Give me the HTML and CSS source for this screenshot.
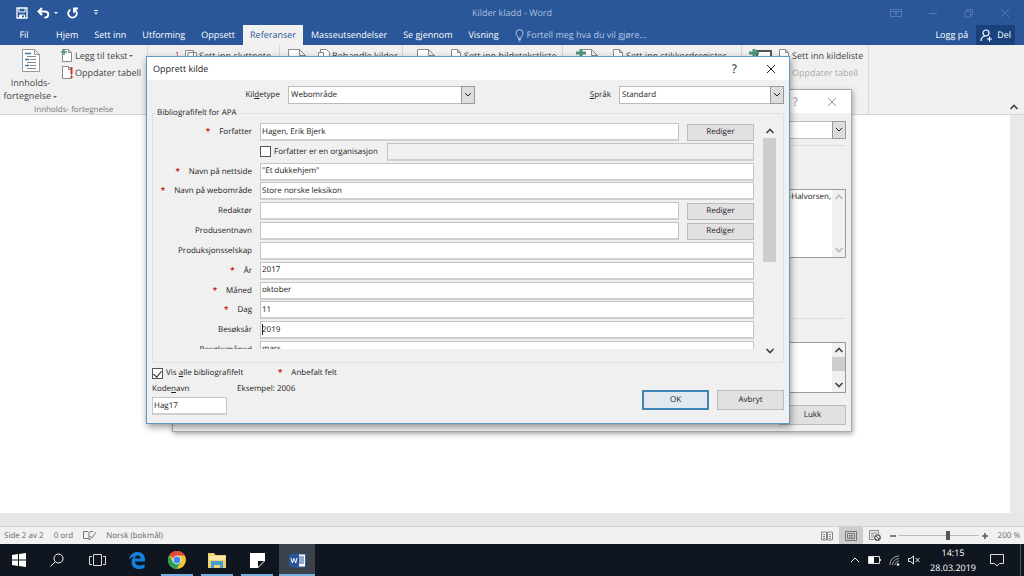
FILE: index.html
```html
<!DOCTYPE html>
<html lang="no">
<head>
<meta charset="utf-8">
<title>Kilder kladd - Word</title>
<link rel="stylesheet" href="styles.css">
</head>
<body>
<svg class="defs" aria-hidden="true">
  <symbol id="chev" viewBox="0 0 8 6"><path d="M1 1l3 3 3-3" fill="none" stroke="currentColor"/></symbol>
  <symbol id="down" viewBox="0 0 10 8"><path d="M1.500 2l3.500 3.500L8.500 2" fill="none" stroke="currentColor" stroke-width="1.700"/></symbol>
  <symbol id="up" viewBox="0 0 10 8"><path d="M1.500 6l3.500-3.500L8.500 6" fill="none" stroke="currentColor" stroke-width="1.700"/></symbol>
  <symbol id="x" viewBox="0 0 10 10"><path d="M1 1l8 8M9 1l-8 8" fill="none" stroke="currentColor"/></symbol>
  <symbol id="doc" viewBox="0 0 12 13"><path d="M1.500.5h6l3 3v9h-9zM7.500.5v3h3" fill="#fff" stroke="#8a8a8a"/></symbol>
  <symbol id="page" viewBox="0 0 18 22"><path d="M.5.5h11l6 6v15H.5zM11.500.5v6h6" fill="#fff" stroke="#8a8a8a"/></symbol>
  <symbol id="plus" viewBox="0 0 12 10"><path d="M6 0v9M1 4h10" stroke="#4f9480" stroke-width="3"/></symbol>
</svg>
<div class="screen">
  <header class="titlebar">
    <div class="quick">
      <button aria-label="Lagre"><svg width="12" height="12" viewBox="0 0 12 12"><path d="M1 1h10v10H1z" fill="none" stroke="#fff" stroke-width="1.300"/><path d="M3 1v4h6V1M3.500 11V8h5v3" fill="none" stroke="#fff"/><path d="M4 8h2v3H4z" fill="#fff"/></svg></button>
      <button aria-label="Angre"><svg width="21" height="12" viewBox="0 0 21 12"><path d="M1.500 4.500h6c5 0 5 6 0 6M5 1L1.500 4.500 5 8" fill="none" stroke="#fff" stroke-width="2"/><path d="M17 5h4l-2 2z" fill="#fff"/></svg></button>
      <button aria-label="Gjenta"><svg width="12" height="12" viewBox="0 0 12 12"><path d="M3.500 2.500a4.300 4.300 0 1 0 4 0M7 6V1.500h4" fill="none" stroke="#fff" stroke-width="1.800"/></svg></button>
      <button aria-label="Tilpass"><svg width="6" height="6" viewBox="0 0 6 6"><path d="M1 .5h4" stroke="#fff"/><path d="M1 2.500h4l-2 2z" fill="#fff"/></svg></button>
    </div>
    <h1>Kilder kladd - Word</h1>
    <div class="winbtns">
      <button aria-label="Båndvisning"><svg width="12" height="10" viewBox="0 0 12 10"><path d="M.5 1.500h11v7H.5zM.5 3.500h11M6 8V5M4.500 6L6 4.500 7.500 6" fill="none" stroke="currentColor"/></svg></button>
      <button aria-label="Minimer"><svg width="10" height="10" viewBox="0 0 10 10"><path d="M1 5.500h8" stroke="currentColor"/></svg></button>
      <button aria-label="Gjenopprett"><svg width="10" height="10" viewBox="0 0 10 10"><path d="M1 3.500h5.500V9H1zM3 3.500v-2h5.500V7h-2" fill="none" stroke="currentColor"/></svg></button>
      <button aria-label="Lukk vindu"><svg width="10" height="10"><use href="#x"/></svg></button>
    </div>
  </header>
  <nav class="tabs">
    <button class="tab file">Fil</button><button class="tab">Hjem</button><button class="tab">Sett inn</button><button class="tab">Utforming</button><button class="tab">Oppsett</button><button class="tab active">Referanser</button><button class="tab">Masseutsendelser</button><button class="tab">Se gjennom</button><button class="tab">Visning</button>
    <button class="tell"><svg width="9" height="13" viewBox="0 0 9 13"><path d="M3 9C3 7 1 6.500 1 4.200a3.500 3.500 0 0 1 7 0C8 6.500 6 7 6 9zM3 10.500h3M3.500 12h2" fill="none" stroke="currentColor"/></svg>Fortell meg hva du vil gjøre...</button>
    <button class="login">Logg på</button>
    <button class="share"><svg width="13" height="13" viewBox="0 0 13 13"><circle cx="6" cy="4" r="3" fill="none" stroke="#fff" stroke-width="1.200"/><path d="M1 12c0-3 2-4.500 4-5M9.500 7.500v5M7 10h5" fill="none" stroke="#fff" stroke-width="1.200"/></svg>Del</button>
  </nav>
  <section class="ribbon">
    <div class="group g-toc">
      <div class="row">
        <button class="big"><svg width="18" height="23" viewBox="0 0 18 23"><path d="M.5.500h12l5 5v17H.5zM12.500.5v5h5" fill="#fff" stroke="#999"/><path d="M3 4.500h6M3 10.500h4M3 16.500h4" stroke="#3c78a8" stroke-width="1.500"/><path d="M5 7.500h9M8 10.500h6M5 13.500h9M8 16.500h6M5 19.500h9" stroke="#888"/></svg><span>Innholds-<br>fortegnelse <i class="caret"></i></span></button>
        <div class="stack">
          <button class="cmd"><svg width="12" height="13"><use href="#doc"/><path d="M3 0v6M0 3h6" stroke="#4f9480" stroke-width="1.500"/></svg>Legg til tekst <i class="caret"></i></button>
          <button class="cmd"><svg width="12" height="13"><use href="#doc"/><path d="M10.500 1v7M10.500 10v2" stroke="#d0342c" stroke-width="2"/></svg>Oppdater tabell</button>
        </div>
      </div>
      <div class="caption">Innholds- fortegnelse</div>
    </div>
    <div class="group g-note"><sup class="note">1</sup><button class="cmd"><svg width="12" height="13"><path d="M.5 1.500h8v8h-8zM3 3.500h8.500v9H3z" fill="#fff" stroke="#888"/></svg>Sett inn sluttnote</button></div>
    <div class="group g-cite"><svg width="18" height="22"><use href="#page"/></svg><button class="cmd"><svg width="12" height="13"><path d="M2.500.5h6l3 3v6h-9z" fill="#fff" stroke="#888"/><path d="M.5 3.500h5v8h-5z" fill="#fff" stroke="#888"/></svg>Behandle kilder</button></div>
    <div class="group g-capt"><svg width="18" height="22"><use href="#page"/></svg><button class="cmd"><svg width="12" height="13"><use href="#doc"/></svg>Sett inn bildetekstliste</button></div>
    <div class="group g-index"><svg width="23" height="22"><use href="#page" x="5" width="18" height="22"/><use href="#plus" width="12" height="10"/></svg><button class="cmd"><svg width="12" height="13"><use href="#doc"/></svg>Sett inn stikkordregister</button></div>
    <div class="group g-auth"><svg width="25" height="22"><path d="M9 2h14v19H9z" fill="#fff" stroke="#555" stroke-width="2"/><use href="#plus" width="12" height="10"/></svg><div class="stack"><button class="cmd"><svg width="12" height="13"><use href="#doc"/></svg>Sett inn kildeliste</button><button class="cmd" disabled><svg width="12" height="13"><use href="#doc"/></svg>Oppdater tabell</button></div></div>
    <button class="collapse" aria-label="Skjul båndet"><svg width="10" height="8"><use href="#up"/></svg></button>
  </section>
  <main class="document"><div class="sheet"></div><div class="vtrack"></div></main>
  <div class="htrack"></div>
  <footer class="status">
    <span>Side 2 av 2</span><span>0 ord</span>
    <svg width="13" height="11" viewBox="0 0 13 11"><path d="M.5 1.500H5l1 1 1-1h3M6 2.500v7M.5 1.500v7H5l1 1M8 9l-2 .5M7 6l2 2 4-6" fill="none" stroke="#777"/></svg>
    <span>Norsk (bokmål)</span>
    <div class="views">
      <button aria-label="Lesemodus"><svg width="12" height="10" viewBox="0 0 12 10"><path d="M.5 1h5v8h-5zM6.500 1h5v8h-5zM2 3.500h2M2 5.500h2M2 7.500h2M8 3.500h2M8 5.500h2M8 7.500h2" fill="none" stroke="#888"/></svg></button>
      <button class="on" aria-label="Utskriftsoppsett"><svg width="12" height="10" viewBox="0 0 12 10"><path d="M.5.5h11v9H.5zM2.500 2.500h7v5h-7zM4 4.500h4M4 6h4" fill="none" stroke="#777"/></svg></button>
      <button aria-label="Weboppsett"><svg width="12" height="11" viewBox="0 0 12 11"><path d="M9.500 4V.5h-9v9H5M2 3h6M2 5h3M2 7h3" fill="none" stroke="#888"/><circle cx="8.500" cy="7.500" r="2.700" fill="#eee" stroke="#555" stroke-width="1.300"/><path d="M7 6l3 3" stroke="#555"/></svg></button>
    </div>
    <div class="zoom"><button aria-label="Zoom ut"><svg width="8" height="8"><path d="M1 4h6" stroke="#555" stroke-width="1.500"/></svg></button><input type="range" min="0" max="100" value="62" aria-label="Zoom"><button aria-label="Zoom inn"><svg width="8" height="8"><path d="M1 4h6M4 1v6" stroke="#555" stroke-width="1.500"/></svg></button><span>200 %</span></div>
  </footer>
  <div class="taskbar">
    <button class="start" aria-label="Start"><svg width="14" height="14" viewBox="0 0 14 14"><path d="M0 2l6-1v5.500H0zM7 1l7-1v6.500H7zM0 7.500h6V13l-6-1zM7 7.500h7V14l-7-1z" fill="#fff"/></svg></button>
    <button aria-label="Søk"><svg width="14" height="14" viewBox="0 0 14 14"><circle cx="8.500" cy="5.500" r="4.500" fill="none" stroke="#fff"/><path d="M5 9l-4.500 4.500" stroke="#fff"/></svg></button>
    <button aria-label="Oppgavevisning"><svg width="17" height="12" viewBox="0 0 17 12"><path d="M4.500.5h8v11h-8zM3 2.500H.5v8H3M14 2.500h2.500v8H14" fill="none" stroke="#ddd"/></svg></button>
    <button aria-label="Edge"><svg width="17" height="17" viewBox="0 0 17 17"><path d="M0 7.500C1 2.500 4.500 0 8.500 0c5 0 7.500 3.500 7.500 7.500v2H6c0 2.500 2 4 4.500 4 2 0 3.500-.5 5-1.300v3.500c-1.500.9-3.500 1.300-5.500 1.300-4.500 0-7.500-2.500-7.500-7 0-2.500 1.500-4.500 3.500-5.600C3.500 4.900 1.500 5.700 0 7.500zM6 6.500h5.500c0-2-1-3-2.700-3S6.200 4.700 6 6.500z" fill="#1480dc"/></svg></button>
    <button class="run" aria-label="Chrome"><svg width="18" height="18" viewBox="0 0 18 18"><circle cx="9" cy="9" r="9" fill="#f4c430"/><path d="M9 9L1.200 4.500A9 9 0 0 1 16.800 4.500H9z" fill="#dd4b3e"/><path d="M1.200 4.500A9 9 0 0 0 8.500 18l4.400-6.700L5.100 11.300z" fill="#2ca05a"/><circle cx="9" cy="9" r="4.300" fill="#fff"/><circle cx="9" cy="9" r="3.400" fill="#4285f4"/></svg></button>
    <button class="run" aria-label="Filutforsker"><svg width="18" height="15" viewBox="0 0 18 15"><path d="M0 0h6l1.500 2H18v13H0z" fill="#f0cf70"/><path d="M1 3h16v4H1z" fill="#fbe8a6"/><path d="M3 8h12v7h-3v-3H6v3H3z" fill="#3f9fd0"/></svg></button>
    <button class="run" aria-label="Notater"><svg width="15" height="15" viewBox="0 0 15 15"><path d="M0 0h15v8L8 15H0z" fill="#fff"/><path d="M8 8h6l-6 6z" fill="#10151d"/></svg></button>
    <button class="run current" aria-label="Word"><svg width="17" height="15" viewBox="0 0 17 15"><path d="M8 1h8.500v13H8z" fill="#fff" stroke="#2b579a"/><path d="M10 4h5M10 6h5M10 8h5M10 10h5" stroke="#2b579a"/><path d="M0 1.500L10 0v15L0 13.500z" fill="#2b579a"/><path d="M2 5l1.300 5L5 5.500 6.700 10 8 5" fill="none" stroke="#fff"/></svg></button>
    <div class="tray">
      <svg width="10" height="6" viewBox="0 0 10 6"><path d="M1 5l4-4 4 4" fill="none" stroke="#fff"/></svg>
      <svg width="13" height="8" viewBox="0 0 13 8"><path d="M.5.5h11v7H.5zM12.500 3v2" fill="none" stroke="#ddd"/><path d="M1 1h5v6H1z" fill="#fff"/></svg>
      <svg width="11" height="11" viewBox="0 0 11 11"><path d="M1 10C1 5 4 1.500 10 1M3.500 10C3.500 7 6 4 10 3.500M6 10c0-2 1.500-3.500 4-4" fill="none" stroke="#aaa"/><circle cx="9" cy="9.500" r="1.300" fill="#fff"/></svg>
      <svg width="12" height="10" viewBox="0 0 12 10"><path d="M.5 3.500h2L5.500 1v8l-3-2.500h-2zM7.500 3l4 4M11.500 3l-4 4" fill="none" stroke="#eee"/></svg>
      <time><span>14:15</span><span>28.03.2019</span></time>
      <svg width="14" height="13" viewBox="0 0 14 13"><path d="M.5.5h13v9h-4L7 12 4.500 9.500h-4z" fill="none" stroke="#ddd"/></svg>
      <i class="peek"></i>
    </div>
  </div>

  <section class="window manager" aria-label="Kildebehandling">
    <div class="caption-bar"><span class="wtitle"></span><button aria-label="Hjelp">?</button><button aria-label="Lukk dialog"><svg width="10" height="10"><use href="#x"/></svg></button></div>
    <div class="manager-body">
      <div class="combo"><select aria-label="Sorter"><option></option></select><span class="arrow"><svg width="8" height="6"><use href="#chev"/></svg></span></div>
      <div class="rule r1"></div>
      <div class="list"><span>-Halvorsen,</span><div class="bar off"><svg width="10" height="8"><use href="#up"/></svg><svg width="10" height="8"><use href="#down"/></svg></div></div>
      <div class="rule r2"></div>
      <div class="list preview"><span></span><div class="bar"><svg width="10" height="8"><use href="#up"/></svg><i class="thumb"></i><svg width="10" height="8"><use href="#down"/></svg></div></div>
      <button class="btn">Lukk</button>
    </div>
  </section>

  <form class="window source" aria-label="Opprett kilde">
    <div class="caption-bar"><span class="wtitle">Opprett kilde</span><button type="button" aria-label="Hjelp">?</button><button type="button" aria-label="Lukk"><svg width="10" height="10"><use href="#x"/></svg></button></div>
    <div class="source-body">
      <div class="top">
        <label for="type">Kil<u>d</u>etype</label><div class="combo"><select id="type"><option>Webområde</option></select><span class="arrow"><svg width="8" height="6"><use href="#chev"/></svg></span></div>
        <label for="lang"><u>S</u>pråk</label><div class="combo"><select id="lang"><option>Standard</option></select><span class="arrow"><svg width="8" height="6"><use href="#chev"/></svg></span></div>
      </div>
      <fieldset>
        <legend>Bibliografifelt for APA</legend>
        <div class="view">
          <div class="fields">
            <div class="field"><label class="req" for="f1">Forfatter</label><input id="f1" value="Hagen, Erik Bjerk"><button type="button" class="btn">Rediger</button></div>
            <div class="field"><span></span><div class="org"><label><input type="checkbox" class="check">Forfatter er en organisasjon</label><input disabled aria-label="Organisasjon"></div></div>
            <div class="field wide"><label class="req" for="f2">Navn på nettside</label><input id="f2" value="&quot;Et dukkehjem&quot;"></div>
            <div class="field wide"><label class="req" for="f3">Navn på webområde</label><input id="f3" value="Store norske leksikon"></div>
            <div class="field"><label for="f4">Redaktør</label><input id="f4"><button type="button" class="btn">Rediger</button></div>
            <div class="field"><label for="f5">Produsentnavn</label><input id="f5"><button type="button" class="btn">Rediger</button></div>
            <div class="field wide"><label for="f6">Produksjonsselskap</label><input id="f6"></div>
            <div class="field wide"><label class="req" for="f7">År</label><input id="f7" value="2017"></div>
            <div class="field wide"><label class="req" for="f8">Måned</label><input id="f8" value="oktober"></div>
            <div class="field wide"><label class="req" for="f9">Dag</label><input id="f9" value="11"></div>
            <div class="field wide focus"><label for="f10">Besøksår</label><input id="f10" value="2019"></div>
            <div class="field wide"><label for="f11">Besøksmåned</label><input id="f11" value="mars"></div>
          </div>
        </div>
        <div class="bar"><svg width="10" height="8"><use href="#up"/></svg><i class="thumb"></i><svg width="10" height="8"><use href="#down"/></svg></div>
      </fieldset>
      <div class="foot">
        <div class="opts">
          <div class="line"><label class="all"><input type="checkbox" class="check" checked>Vis <span><u>a</u>lle bibliografifelt</span></label><span class="req">Anbefalt felt</span></div>
          <div class="line"><label class="code" for="tag">Kode<u>n</u>avn</label><span>Eksempel: 2006</span></div>
          <input id="tag" value="Hag17">
        </div>
        <div class="actions"><button type="button" class="btn ok">OK</button><button type="button" class="btn">Avbryt</button></div>
      </div>
    </div>
  </form>
</div>
</body>
</html>
```
FILE: styles.css
```css
* { box-sizing: border-box; }
body { margin: 0; font: 9px/12px "Open Sans", "Noto Sans", sans-serif; color: #222; text-rendering: geometricPrecision; }
button, input, select { font: inherit; color: inherit; margin: 0; text-rendering: inherit; }
button { background: none; border: 0; padding: 0; }
svg { display: block; flex: none; }
.defs { position: absolute; width: 0; height: 0; }
.screen { position: relative; display: flex; flex-direction: column; height: 100vh; overflow: hidden; }

.titlebar { display: grid; grid-template-columns: 1fr auto 1fr; align-items: center; height: 25px; background: #2a579a; color: #a9bddb; }
.titlebar h1 { margin: 0; font-size: 9px; font-weight: 400; }
.quick { display: flex; align-items: center; gap: 9px; padding-left: 16px; }
.quick button:last-child { margin-left: 5px; }
.winbtns { display: flex; justify-content: flex-end; gap: 26px; padding-right: 14px; color: #5479b3; }

.tabs { display: flex; align-items: stretch; height: 20px; background: #2a579a; color: #fff; }
.tab { padding: 0 8px; }
.tab.file { width: 48px; }
.tab.active { background: #f1f1f1; color: #2a579a; padding: 0 7px; }
.tell { display: flex; align-items: center; gap: 3px; margin-left: 8px; color: #b4c7e2; }
.login { margin-left: auto; }
.share { display: flex; align-items: center; gap: 4px; margin: 0 9px 0 8px; padding: 0 4px; background: #19417c; }

.ribbon { display: flex; height: 70px; background: #f0f0f0; border-bottom: 1px solid #d5d5d5; color: #444; }
.group { display: flex; align-items: flex-start; padding-top: 4px; border-right: 1px solid #d8d8d8; flex: none; }
.row { display: flex; }
.cmd { display: flex; align-items: center; gap: 2px; height: 13px; white-space: nowrap; }
.cmd:disabled { color: #aaa; }
.stack { display: flex; flex-direction: column; gap: 4px; }
.g-toc { width: 148px; flex-direction: column; }
.big { width: 61px; display: flex; flex-direction: column; align-items: center; gap: 4px; line-height: 13px; white-space: nowrap; }
.caption { padding: 3px 0 0 34px; font-size: 8px; line-height: 10px; color: #777; }
.caret { display: inline-block; border: 2px solid transparent; border-top-color: #666; border-bottom: 0; vertical-align: middle; }
.note { width: 10px; margin-left: 27px; color: #b33; }
.g-note { width: 132px; }
.g-cite { width: 123px; padding-left: 8px; gap: 12px; }
.g-capt { width: 160px; padding-left: 14px; gap: 15px; }
.g-index { width: 179px; padding-left: 12px; gap: 14px; }
.g-auth { width: 127px; padding-left: 6px; gap: 5px; }
.collapse { margin: auto 5px 3px auto; }

.document { flex: 1; display: flex; background: #fff; }
.sheet { flex: 1; }
.vtrack { width: 14px; background: #e9e9e9; }
.htrack { height: 14px; background: #e6e6e6; border-bottom: 1px solid #d0d0d0; }
.status { display: flex; align-items: center; gap: 10px; height: 17px; padding-left: 4px; background: #f1f1f1; color: #666; font-size: 8px; }
.views { display: flex; margin-left: auto; }
.views button { width: 24px; height: 17px; display: grid; place-items: center; }
.views .on { background: #cdcdcd; }
.zoom { display: flex; align-items: center; gap: 2px; margin-left: -8px; padding-right: 4px; }
.zoom span { margin-left: 7px; }
.zoom input { appearance: none; width: 80px; height: 12px; background: linear-gradient(#bbb, #bbb) center / 100% 1px no-repeat; }
.zoom input::-webkit-slider-thumb { appearance: none; width: 4px; height: 9px; background: #555; }

.taskbar { display: flex; height: 32px; background: #10161f; color: #fff; }
.taskbar button { width: 40px; display: grid; place-items: center; }
.taskbar .start { width: 37px; }
.taskbar .run { width: 32px; margin: 0 4px; border-bottom: 2px solid #76b0e0; padding-top: 2px; }
.taskbar .current { width: 36px; margin: 0 2px; background: #3b424c; }
.tray { display: flex; align-items: center; gap: 8px; margin-left: auto; }
.tray time { display: flex; flex-direction: column; align-items: center; margin: 0 6px 0 2px; line-height: 15px; }
.peek { align-self: stretch; width: 1px; margin: 0 3px 0 8px; background: #555; }

.window { position: absolute; background: #f0f0f0; font-size: 8px; }
.caption-bar { display: flex; align-items: center; height: 23px; padding: 0 13px 0 6px; gap: 29px; background: #fff; }
.wtitle { flex: 1; font-size: 9px; }
.caption-bar button { font-size: 12px; }
.combo { position: relative; display: flex; height: 18px; background: #fff; border: 1px solid #bbb; }
.combo select { appearance: none; flex: 1; min-width: 0; border: 0; background: none; padding: 0 2px; }
.arrow { position: absolute; top: -1px; right: -1px; bottom: -1px; width: 14px; display: grid; place-items: center; background: #ddd; border: 1px solid #999; pointer-events: none; }
.btn { height: 17px; background: #e1e1e1; border: 1px solid #bbb; text-align: center; }
.bar { display: flex; flex-direction: column; align-items: center; width: 13px; color: #444; }
.bar svg:last-child { margin-top: auto; }
.bar.off { color: #bbb; }
.thumb { width: 100%; background: #cdcdcd; }

.manager { left: 172px; top: 89px; width: 680px; border: 1px solid #aaa; box-shadow: 1px 2px 5px #0005; }
.manager .caption-bar { color: #999; padding-right: 14px; }
.manager-body { display: flex; flex-direction: column; align-items: flex-end; padding: 8px 5px 6px; }
.manager .combo, .list { width: 400px; }
.rule { width: 100%; height: 1px; background: #ddd; }
.r1 { margin: 6px 0 43px; }
.list { display: flex; justify-content: flex-end; height: 69px; background: #fff; border: 1px solid #999; }
.list span { padding-top: 1px; }
.list .bar { background: #f0f0f0; margin-left: 1px; padding: 3px 0; }
.r2 { margin: 60px 0 23px; }
.preview { height: 51px; margin-bottom: 12px; }
.preview .thumb { height: 14px; margin-top: 3px; }
.manager .btn { width: 67px; height: 20px; }

.source { left: 146px; top: 56px; width: 644px; border: 1px solid #5d9cc0; box-shadow: 1px 3px 7px #0006; }
.source-body { padding: 6px 5px 8px; }
.top { display: grid; grid-template-columns: 136px 187px 144px 1fr; align-items: center; }
.top label { text-align: right; padding-right: 8px; }
fieldset { display: flex; justify-content: space-between; min-width: 0; margin: 3px 0 0; padding: 4px 7px 0 0; border: 1px solid #e0e0e0; }
legend { margin-left: 2px; padding: 0 2px; line-height: 12px; }
.view { flex: 1; height: 226px; margin: 0 9px 13px 0; overflow: hidden; }
.fields { display: flex; flex-direction: column; justify-content: space-between; height: 236px; }
.field { display: grid; grid-template-columns: 99px 1fr 67px; column-gap: 8px; align-items: center; height: 18px; }
.field.wide { grid-template-columns: 99px 1fr; }
.field > label { text-align: right; white-space: nowrap; }
.req::before { content: "*"; margin-right: 9px; color: #c22; font-weight: 700; }
.field input:not(.check), .opts > input { min-width: 0; height: 18px; padding: 0 1px 1px; background: #fff; border: 1px solid #c4c4c4; border-bottom: 2px solid #cfcfcf; }
.focus input:not(.check) { background: linear-gradient(#222, #222) 1px 2px / 1px 11px no-repeat, #fff; }
.org { grid-column: 2 / 4; display: flex; gap: 9px; }
.org label { display: flex; align-items: center; gap: 3px; white-space: nowrap; }
.org > input:disabled { flex: 1; }
.field .org > input:disabled { background: #f0f0f0; }
.check { appearance: none; display: grid; place-items: center; flex: none; width: 11px; height: 11px; background: #fff; border: 1px solid #555; }
.check:checked::after { content: ""; width: 4px; height: 7px; margin-bottom: 2px; border: solid #222; border-width: 0 1px 1px 0; transform: rotate(40deg); }
fieldset .bar { padding: 4px 0 7px; }
fieldset .thumb { height: 124px; margin-top: 3px; }
.foot { display: flex; justify-content: space-between; align-items: flex-end; padding-top: 2px; }
.opts { display: flex; flex-direction: column; }
.line { display: flex; height: 16px; align-items: center; }
.all { display: flex; align-items: center; width: 126px; white-space: pre; }
.all .check { margin-right: 3px; }
.code { width: 85px; }
.opts > input { width: 75px; }
.actions { display: flex; gap: 8px; padding-bottom: 5px; }
.actions .btn { width: 67px; height: 20px; }
.actions .ok { border: 2px solid #3c84b4; background: #e1e9ee; line-height: 14px; }
```
